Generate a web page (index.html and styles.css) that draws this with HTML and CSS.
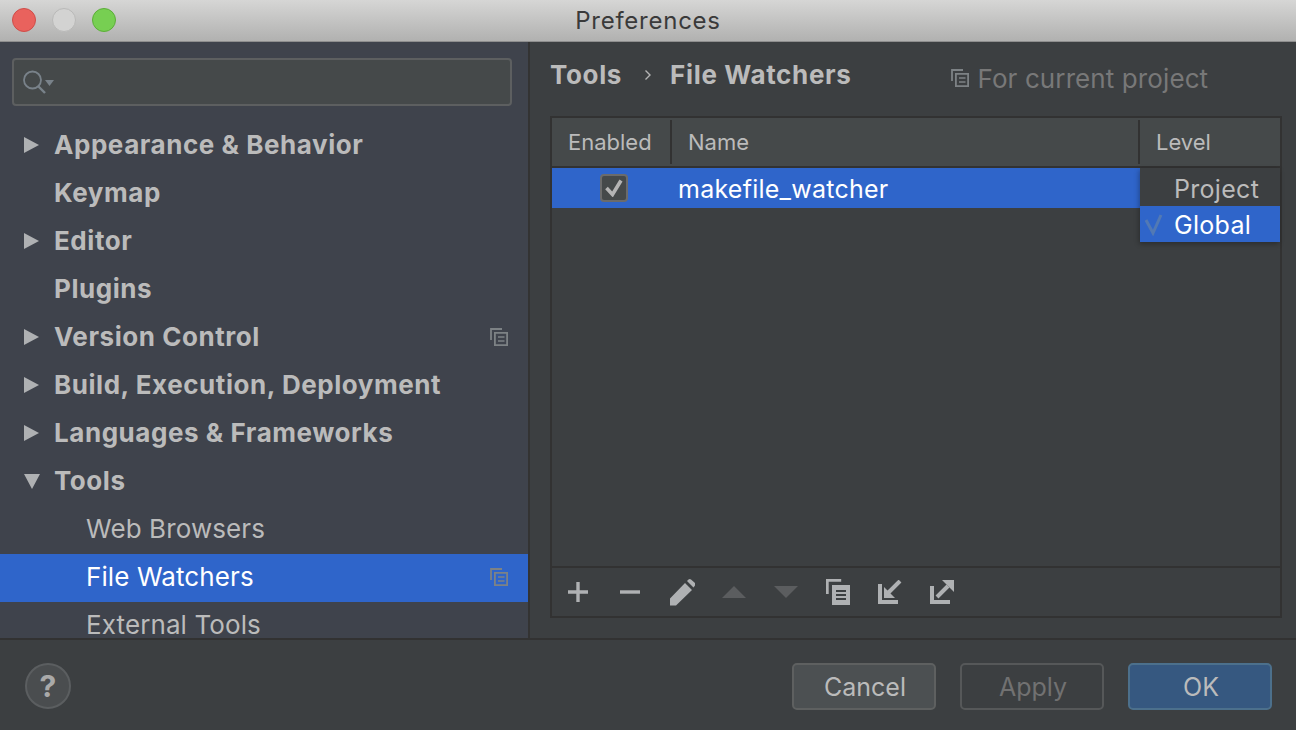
FILE: index.html
```html
<!DOCTYPE html>
<html lang="en">
<head>
    <meta charset="UTF-8">
    <title>Preferences</title>
    <link rel="stylesheet" href="styles.css">
</head>
<body>

    <div class="window">
        <div class="titlebar">
            <div class="lights">
                <span class="light red"></span>
                <span class="light grey"></span>
                <span class="light green"></span>
            </div>
            <div class="title">Preferences</div>
        </div>

        <div class="content">
            <div class="sidebar">
                <div class="search">
                    <svg width="34" height="26" viewBox="0 0 34 26">
                        <circle cx="9.500" cy="10" r="8.500" fill="none" stroke="#79828a" stroke-width="1.800"/>
                        <path d="M15 16l7 7" stroke="#79828a" stroke-width="2.400"/>
                        <path d="M22 10h9l-4.500 6z" fill="#79828a"/>
                    </svg>
                </div>
                <ul class="tree">
                    <li class="row top"><span class="arrow right"></span>Appearance &amp; Behavior</li>
                    <li class="row top">Keymap</li>
                    <li class="row top"><span class="arrow right"></span>Editor</li>
                    <li class="row top">Plugins</li>
                    <li class="row top"><span class="arrow right"></span>Version Control
                        <svg class="scope" width="18" height="18" viewBox="0 0 18 18"><use href="#copy-icon"/></svg>
                    </li>
                    <li class="row top"><span class="arrow right"></span>Build, Execution, Deployment</li>
                    <li class="row top"><span class="arrow right"></span>Languages &amp; Frameworks</li>
                    <li class="row top"><span class="arrow down"></span>Tools</li>
                    <li class="row sub">Web Browsers</li>
                    <li class="row sub selected">File Watchers
                        <svg class="scope" width="18" height="18" viewBox="0 0 18 18"><use href="#copy-icon"/></svg>
                    </li>
                    <li class="row sub">External Tools</li>
                </ul>
            </div>

            <div class="main">
                <div class="crumbs">
                    <span class="crumb">Tools</span>
                    <svg class="chevron" width="8" height="12" viewBox="0 0 8 12"><path d="M1.500 1.500L6 6l-4.500 4.500" fill="none" stroke="#b4b4b4" stroke-width="1.400"/></svg>
                    <span class="crumb">File Watchers</span>
                    <span class="project">
                        <svg width="18" height="18" viewBox="0 0 18 18"><use href="#copy-icon"/></svg>
                        For current project
                    </span>
                </div>

                <div class="panel">
                    <div class="thead">
                        <div class="th enabled">Enabled</div>
                        <div class="th name">Name</div>
                        <div class="th level">Level</div>
                    </div>
                    <div class="tbody">
                        <div class="watcher">
                            <div class="check-cell">
                                <span class="check">
                                    <svg width="18" height="18" viewBox="0 0 18 18"><path d="M1.500 9l6 6.500L16 1.500" fill="none" stroke="#b4b4b4" stroke-width="3.600"/></svg>
                                </span>
                            </div>
                            <div class="watcher-name">makefile_watcher</div>
                        </div>
                        <div class="popup">
                            <div class="option">Project</div>
                            <div class="option active">
                                <svg class="tick" width="20" height="22" viewBox="0 0 20 22"><path d="M2 6l7 13L17 1" fill="none" stroke="#5279b4" stroke-width="3"/></svg>
                                Global
                            </div>
                        </div>
                    </div>
                    <div class="toolbar">
                        <div class="tool"><svg width="20" height="20" viewBox="0 0 20 20"><path d="M10 0v20M0 10h20" stroke="#afb1b3" stroke-width="3.400"/></svg></div>
                        <div class="tool"><svg width="20" height="20" viewBox="0 0 20 20"><path d="M0 10h20" stroke="#afb1b3" stroke-width="3.400"/></svg></div>
                        <div class="tool"><svg width="26" height="28" viewBox="-1 0 26 28"><path d="M0 27.500v-7L15 5l7 7L6 27.500zM17 3l1.500-1.500a2 2 0 0 1 2.500 0L25 5a2 2 0 0 1 0 2.500L23.500 9.500z" fill="#afb1b3"/></svg></div>
                        <div class="tool"><svg width="24" height="12" viewBox="0 0 24 12"><path d="M0 12L12 0l12 12z" fill="#5b5d5f"/></svg></div>
                        <div class="tool"><svg width="24" height="12" viewBox="0 0 24 12"><path d="M0 0h24L12 12z" fill="#5b5d5f"/></svg></div>
                        <div class="tool"><svg width="24" height="26" viewBox="0 0 24 26"><path d="M1.200 15V1.200h14" fill="none" stroke="#afb1b3" stroke-width="3"/><path d="M6 6h18v20H6z" fill="#afb1b3"/><path d="M10 12h10M10 16h10M10 20h10" stroke="#3c3f41" stroke-width="2"/></svg></div>
                        <div class="tool"><svg width="24" height="24" viewBox="0 0 24 24"><path d="M2 4v18h18" fill="none" stroke="#afb1b3" stroke-width="4"/><path d="M22 1L10 13" stroke="#afb1b3" stroke-width="4"/><path d="M6 7v11h11z" fill="#afb1b3"/></svg></div>
                        <div class="tool"><svg width="24" height="24" viewBox="0 0 24 24"><path d="M2 6v16h18" fill="none" stroke="#afb1b3" stroke-width="4"/><path d="M7 17L18 6" stroke="#afb1b3" stroke-width="4"/><path d="M12 0h12v12z" fill="#afb1b3"/></svg></div>
                    </div>
                </div>
            </div>
        </div>

        <div class="footer">
            <div class="help">?</div>
            <div class="buttons">
                <div class="button">Cancel</div>
                <div class="button disabled">Apply</div>
                <div class="button primary">OK</div>
            </div>
        </div>
    </div>

    <svg class="defs" width="0" height="0">
        <symbol id="copy-icon" viewBox="0 0 18 18">
            <path d="M1 12V1h11" fill="none" stroke="#7d8285" stroke-width="1.800"/>
            <path d="M4.900 4.900h12.200v12.200H4.900z" fill="none" stroke="#7d8285" stroke-width="1.800"/>
            <path d="M8 9h6.500M8 13h6.500" stroke="#7d8285" stroke-width="1.600"/>
        </symbol>
    </svg>

</body>
</html>
```

FILE: styles.css
```css
* {
    margin: 0;
    padding: 0;
    box-sizing: border-box;
}

body {
    font-family: 'Inter', 'Liberation Sans', sans-serif;
    background: #3c3f41;
    color: #bbb;
    overflow: hidden;
}

.window {
    width: 1296px;
    height: 730px;
    display: flex;
    flex-direction: column;
}

.defs {
    position: absolute;
}

.titlebar {
    height: 42px;
    flex: none;
    display: flex;
    align-items: center;
    justify-content: center;
    position: relative;
    background: linear-gradient(#d6d6d5, #b1b1b0);
    border-bottom: 1px solid #8e8e8e;
}

.title {
    font-size: 24px;
    color: #3a3a3a;
    letter-spacing: 0.75px;
}

.lights {
    position: absolute;
    left: 12px;
    top: 8px;
    display: flex;
    gap: 16px;
}

.light {
    width: 24px;
    height: 24px;
    border-radius: 50%;
    border: 1px solid;
}

.red { background: #e9625d; border-color: #cf4d49; }
.grey { background: #d3d3d2; border-color: #b9b9b8; }
.green { background: #77cf52; border-color: #5cae39; }

.content {
    flex: 1;
    display: flex;
    min-height: 0;
}

.sidebar {
    width: 530px;
    flex: none;
    background: #3f434c;
    border-right: 2px solid #333;
    overflow: hidden;
}

.search {
    margin: 16px 16px 16px 12px;
    height: 48px;
    background: #45494a;
    border: 2px solid #5d5f60;
    border-radius: 4px;
    padding: 10px 0 0 9px;
}

.search svg {
    display: block;
}

.tree {
    list-style: none;
}

.row {
    height: 48px;
    display: flex;
    align-items: center;
    position: relative;
    padding-bottom: 4px;
    font-size: 26px;
    white-space: nowrap;
    color: #bbb;
}

.top {
    padding-left: 54px;
    font-weight: 700;
    letter-spacing: 0.55px;
}

.sub {
    padding-left: 86px;
    letter-spacing: 0.1px;
}

.selected {
    background: #2f65ca;
    color: #fff;
}

.arrow {
    position: absolute;
    width: 0;
    height: 0;
    border-style: solid;
    border-color: transparent;
}

.arrow.right {
    left: 24px;
    top: 15px;
    border-width: 8px 0 8px 15px;
    border-left-color: #afb1b3;
}

.arrow.down {
    left: 24px;
    top: 16px;
    border-width: 15px 8px 0 8px;
    border-top-color: #afb1b3;
}

.scope {
    position: absolute;
    right: 20px;
    top: 14px;
}

.main {
    flex: 1;
    padding: 0 14px 20px 20px;
    display: flex;
    flex-direction: column;
}

.crumbs {
    height: 74px;
    flex: none;
    display: flex;
    align-items: center;
    padding-bottom: 10px;
    font-size: 26px;
    font-weight: 700;
    letter-spacing: 0.65px;
}

.crumb {
    color: #bbb;
}

.chevron {
    margin: 2px 18px 0 22px;
}

.project {
    margin-left: 99px;
    display: flex;
    align-items: center;
    gap: 9px;
    padding-top: 8px;
    font-weight: 400;
    color: #787878;
    letter-spacing: 0.1px;
}

.panel {
    flex: 1;
    display: flex;
    flex-direction: column;
    border: 2px solid #323232;
    min-height: 0;
}

.thead {
    height: 50px;
    flex: none;
    display: flex;
    background: #45494a;
    border-bottom: 2px solid #323232;
    align-items: stretch;
    font-size: 22px;
    color: #bbb;
}

.th {
    display: flex;
    align-items: center;
    padding-left: 16px;
    margin: 2px 0;
    padding-bottom: 1px;
}

.enabled { width: 118px; }
.name { width: 468px; border-left: 2px solid #323232; }
.level { flex: 1; border-left: 2px solid #323232; }

.tbody {
    flex: 1;
    position: relative;
    border-bottom: 2px solid #323232;
}

.watcher {
    height: 40px;
    display: flex;
    align-items: center;
    background: #2f65ca;
    color: #fff;
    font-size: 25px;
    letter-spacing: 0.25px;
}

.watcher-name {
    padding-top: 2px;
}

.check-cell {
    width: 126px;
    padding-left: 48px;
}

.check {
    width: 28px;
    height: 28px;
    display: flex;
    align-items: center;
    justify-content: center;
    background: #45494a;
    border: 2px solid #6b6b6b;
    border-radius: 4px;
}

.popup {
    position: absolute;
    right: 0;
    top: 0;
    width: 140px;
    height: 74px;
    background: #3c3f41;
    box-shadow: -1px 2px 5px rgba(0, 0, 0, 0.3);
    padding-top: 2px;
    font-size: 25px;
    letter-spacing: 0.3px;
}

.option {
    height: 36px;
    display: flex;
    align-items: center;
    padding: 2px 0 0 34px;
    color: #bbb;
    position: relative;
}

.option.active {
    background: #2f65ca;
    color: #fff;
}

.tick {
    position: absolute;
    left: 4px;
    top: 8px;
}

.toolbar {
    height: 48px;
    flex: none;
    display: flex;
    align-items: center;
}

.tool {
    width: 52px;
    display: flex;
    justify-content: center;
}

.footer {
    height: 92px;
    flex: none;
    display: flex;
    align-items: center;
    justify-content: space-between;
    padding: 2px 24px 0 25px;
    border-top: 2px solid #323232;
    background: #3c3f41;
}

.help {
    width: 46px;
    height: 46px;
    border-radius: 50%;
    background: #4a4d4f;
    border: 2px solid #5b5e60;
    display: flex;
    align-items: center;
    justify-content: center;
    font-size: 30px;
    font-weight: 700;
    color: #a9a9a9;
}

.buttons {
    display: flex;
    gap: 24px;
}

.button {
    width: 144px;
    height: 47px;
    display: flex;
    align-items: center;
    justify-content: center;
    padding: 1px 0 0 2px;
    font-size: 25px;
    color: #bbb;
    background: #4c5052;
    border: 2px solid #5e6060;
    border-radius: 5px;
}

.disabled {
    background: transparent;
    color: #717171;
    border-color: #565859;
}

.primary {
    background: #365880;
    border-color: #4c708c;
}
```
